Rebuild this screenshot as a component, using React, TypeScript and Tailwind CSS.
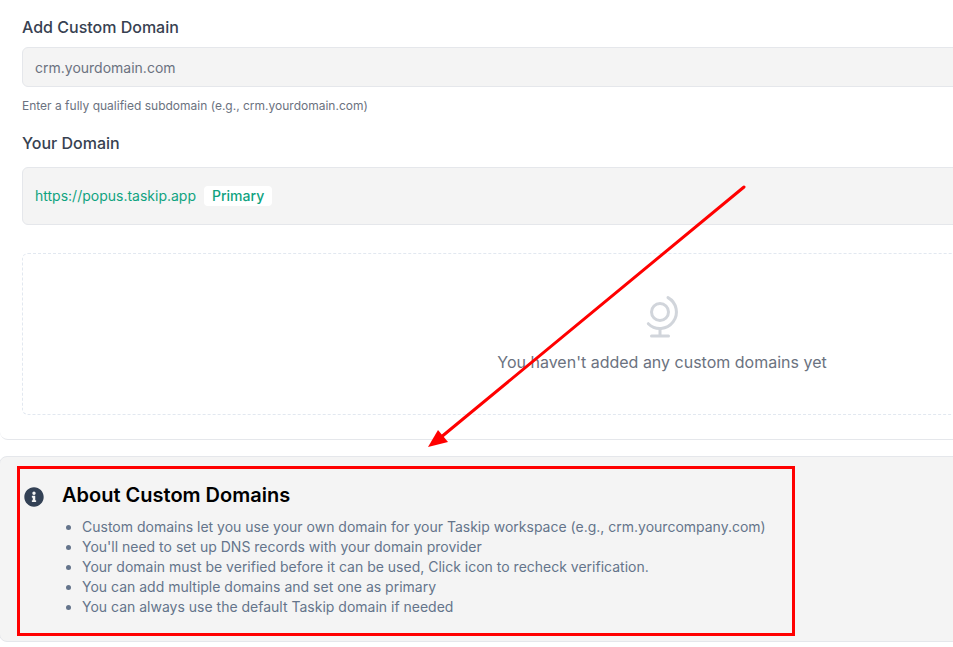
import { FaInfoCircle } from "react-icons/fa"

const NOTES = [
  "Custom domains let you use your own domain for your Taskip workspace (e.g., crm.yourcompany.com)",
  "You'll need to set up DNS records with your domain provider",
  "Your domain must be verified before it can be used, Click icon to recheck verification.",
  "You can add multiple domains and set one as primary",
  "You can always use the default Taskip domain if needed",
]

const GlobeIcon = (): JSX.Element => (
  <svg width="40" height="46" viewBox="0 0 40 46" fill="none" stroke="#d1d5db" strokeWidth="3" strokeLinecap="round">
    <circle cx="18" cy="18" r="8.5" />
    <path d="M26 3.6 A16.5 16.5 0 1 1 6.3 29.7" />
    <path d="M18 34.5V42M9.5 42h17" />
  </svg>
)

const App = (): JSX.Element => {
  return (
    <div className="relative w-[953px] h-[647px] overflow-hidden bg-white font-['Inter',sans-serif]">
      <div className="w-[1324px]">
        <section className="px-[22px] pt-[15px] pb-6 bg-white border-b border-[#e5e7eb] rounded-bl-lg h-[440px]">
          <h3 className="text-base leading-6 font-medium text-[#374151] mb-2">Add Custom Domain</h3>
          <div className="h-10 flex items-center px-3 pt-0.5 bg-[#f4f4f4] border border-[#e5e7eb] rounded-md text-sm text-[#6b7280]">
            crm.yourdomain.com
          </div>
          <p className="mt-[11px] text-xs leading-4 text-[#6b7280]">Enter a fully qualified subdomain (e.g., crm.yourdomain.com)</p>
          <h3 className="mt-[17px] mb-3 text-base leading-6 font-medium text-[#374151]">Your Domain</h3>
          <div className="h-[58px] flex items-center gap-2 px-3 bg-[#f4f4f4] border border-[#e5e7eb] rounded-md">
            <span className="text-sm text-[#10a37f]">https://popus.taskip.app</span>
            <span className="h-5 flex items-center px-2 bg-white rounded text-sm font-medium text-[#10a37f]">Primary</span>
          </div>
          <div className="mt-7 h-[162px] flex flex-col items-center justify-center border border-dashed border-[#e2e8f0] rounded-md">
            <GlobeIcon />
            <p className="mt-2.5 text-base leading-6 text-[#6b7280]">You haven't added any custom domains yet</p>
          </div>
        </section>
        <section className="mt-4 -ml-px h-[186px] flex gap-[18px] pl-6 pt-7 bg-[#f4f4f4] border border-[#e5e7eb] rounded-lg">
          <FaInfoCircle className="mt-[2px] w-5 h-5 shrink-0 text-[#334155]" />
          <div>
            <h3 className="text-xl leading-5 font-semibold text-black mb-3">About Custom Domains</h3>
            <ul className="list-disc pl-5 text-sm leading-5 text-[#64748b]">
              {NOTES.map((note) => (
                <li key={note}>{note}</li>
              ))}
            </ul>
          </div>
        </section>
      </div>

      {/* annotations drawn over the screenshot */}
      <div className="absolute left-[17px] top-[466px] w-[778px] h-[170px] border-[3px] border-[#ff0000]" />
      <svg className="absolute inset-0 pointer-events-none" width="953" height="647" viewBox="0 0 953 647">
        <line x1="744" y1="187" x2="440" y2="438" stroke="#ff0000" strokeWidth="3" strokeLinecap="round" />
        <polygon points="428,447 438,430 448,442" fill="#ff0000" />
      </svg>
    </div>
  )
}

export default App
